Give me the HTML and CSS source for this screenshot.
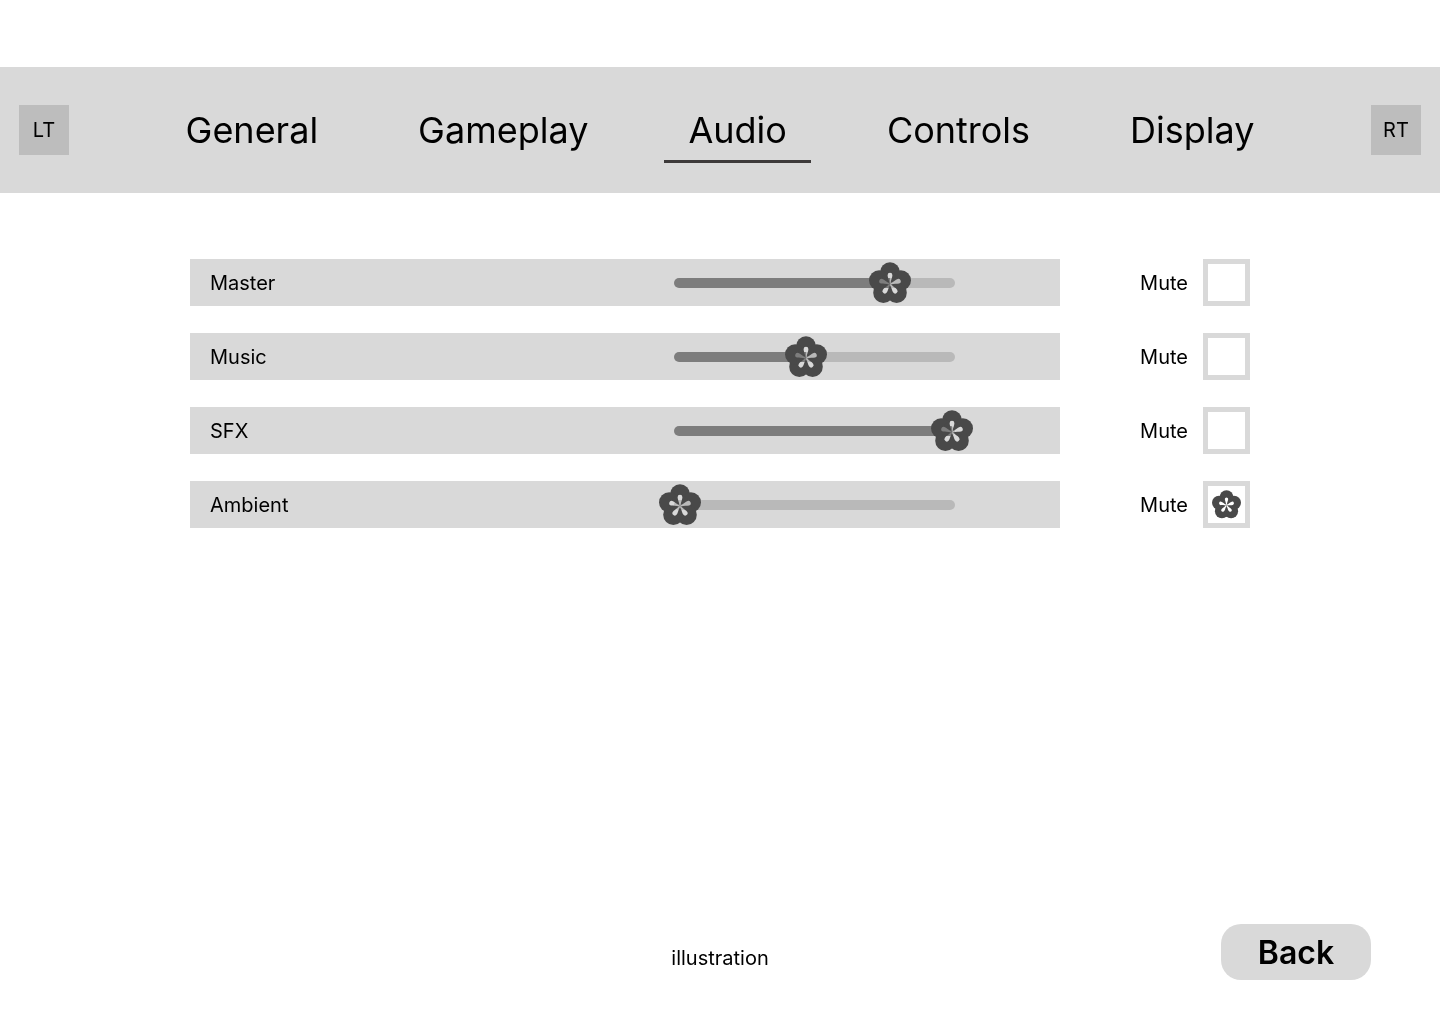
FILE: index.html
```html
<!DOCTYPE html>
<html lang="en">
<head>
    <meta charset="UTF-8">
    <meta name="viewport" content="width=device-width, initial-scale=1.0">
    <title>Audio settings</title>
    <link rel="stylesheet" href="styles.css">
</head>
<body>
<svg class="sprite" aria-hidden="true">
    <symbol id="flower" viewBox="0 0 42 42">
        <mask id="petals">
            <rect width="42" height="42" fill="#fff"/>
            <g fill="#000">
                <path id="stamen" d="M20.4 21.5 C20.2 18 18.6 15.5 18.6 13.2 A2.4 2.4 0 1 1 23.4 13.2 C23.4 15.5 21.8 18 21.6 21.5 Z"/>
                <use href="#stamen" transform="rotate(72 21 22)"/>
                <use href="#stamen" transform="rotate(144 21 22)"/>
                <use href="#stamen" transform="rotate(216 21 22)"/>
                <use href="#stamen" transform="rotate(288 21 22)"/>
            </g>
        </mask>
        <g mask="url(#petals)">
            <circle cx="21" cy="10.2" r="10"/>
            <circle cx="31.8" cy="18.4" r="10.2"/>
            <circle cx="27.6" cy="30.8" r="10.2"/>
            <circle cx="14.4" cy="30.8" r="10.2"/>
            <circle cx="10.2" cy="18.4" r="10.2"/>
            <circle cx="21" cy="21" r="10"/>
        </g>
    </symbol>
</svg>
<header class="header">
    <button type="button" class="trigger">LT</button>
    <nav class="tabs">
        <a class="tab" href="#general">General</a>
        <a class="tab" href="#gameplay">Gameplay</a>
        <a class="tab active" href="#audio" aria-current="page">Audio</a>
        <a class="tab" href="#controls">Controls</a>
        <a class="tab" href="#display">Display</a>
    </nav>
    <button type="button" class="trigger">RT</button>
</header>
<main class="settings">
    <div class="row">
        <div class="bar">
            <label for="master">Master</label>
            <div class="slider" style="--value: 77%">
                <input type="range" id="master" min="0" max="100" value="77">
                <svg class="knob" aria-hidden="true"><use href="#flower"/></svg>
            </div>
        </div>
        <label class="mute">Mute
            <span class="check">
                <input type="checkbox">
                <svg class="mark" aria-hidden="true"><use href="#flower"/></svg>
            </span>
        </label>
    </div>
    <div class="row">
        <div class="bar">
            <label for="music">Music</label>
            <div class="slider" style="--value: 47%">
                <input type="range" id="music" min="0" max="100" value="47">
                <svg class="knob" aria-hidden="true"><use href="#flower"/></svg>
            </div>
        </div>
        <label class="mute">Mute
            <span class="check">
                <input type="checkbox">
                <svg class="mark" aria-hidden="true"><use href="#flower"/></svg>
            </span>
        </label>
    </div>
    <div class="row">
        <div class="bar">
            <label for="sfx">SFX</label>
            <div class="slider" style="--value: 99%">
                <input type="range" id="sfx" min="0" max="100" value="99">
                <svg class="knob" aria-hidden="true"><use href="#flower"/></svg>
            </div>
        </div>
        <label class="mute">Mute
            <span class="check">
                <input type="checkbox">
                <svg class="mark" aria-hidden="true"><use href="#flower"/></svg>
            </span>
        </label>
    </div>
    <div class="row">
        <div class="bar">
            <label for="ambient">Ambient</label>
            <div class="slider" style="--value: 2%">
                <input type="range" id="ambient" min="0" max="100" value="2">
                <svg class="knob" aria-hidden="true"><use href="#flower"/></svg>
            </div>
        </div>
        <label class="mute">Mute
            <span class="check">
                <input type="checkbox" checked>
                <svg class="mark" aria-hidden="true"><use href="#flower"/></svg>
            </span>
        </label>
    </div>
</main>
<footer class="footer">
    <p class="caption">illustration</p>
    <button type="button" class="back">Back</button>
</footer>
<script>
    // move the knob with the slider value
    for (const range of document.querySelectorAll('.slider input')) {
        range.addEventListener('input', () => {
            range.parentElement.style.setProperty('--value', range.value + '%')
        })
    }
</script>
</body>
</html>
```
FILE: styles.css
```css
* {
    box-sizing: border-box;
}

body {
    display: flex;
    flex-direction: column;
    min-height: 100vh;
    margin: 0;
    padding-top: 67px;
    font-family: Inter, "Liberation Sans", sans-serif;
    font-size: 20px;
    line-height: 24px;
    color: #000;
    background: #fff;
}

button,
input {
    margin: 0;
    font: inherit;
    color: inherit;
}

.sprite {
    position: absolute;
    width: 0;
    height: 0;
}

/* header */
.header {
    display: flex;
    align-items: center;
    justify-content: space-between;
    padding: 30px 19px;
    background: #d9d9d9;
}

.trigger {
    width: 50px;
    height: 50px;
    padding: 0;
    border: 0;
    background: #bdbdbd;
}

.tabs {
    display: flex;
    gap: 52px;
}

.tab {
    padding: 11px 24px 8px;
    border-bottom: 3px solid transparent;
    font-size: 36px;
    line-height: 44px;
    color: inherit;
    text-decoration: none;
}

.tab.active {
    border-color: #3d3a3a;
}

/* volume rows */
.settings {
    display: flex;
    flex-direction: column;
    gap: 27px;
    width: 100%;
    max-width: 1100px;
    margin: 66px auto;
    padding: 0 20px;
}

.row {
    display: flex;
    gap: 80px;
}

.bar {
    display: flex;
    flex: 1;
    align-items: center;
    justify-content: space-between;
    height: 47px;
    padding: 0 105px 0 20px;
    background: #d9d9d9;
}

.slider {
    position: relative;
    display: flex;
    width: 281px;
}

.slider input {
    width: 100%;
    height: 10px;
    border-radius: 5px;
    appearance: none;
    background: linear-gradient(to right, #7d7d7d var(--value), #b9b9b9 var(--value));
}

.slider input::-webkit-slider-thumb {
    width: 42px;
    height: 42px;
    appearance: none;
    opacity: 0;
}

/* a muted channel has no filled part */
.row:has(.check input:checked) .slider input {
    background: #b9b9b9;
}

.knob {
    position: absolute;
    top: 50%;
    left: var(--value);
    width: 42px;
    height: 42px;
    fill: #494949;
    transform: translate(-50%, -50%);
    pointer-events: none;
}

.mute {
    display: flex;
    align-items: center;
    gap: 15px;
}

.check {
    display: grid;
    place-items: center;
}

.check input,
.mark {
    grid-area: 1 / 1;
}

.check input {
    width: 47px;
    height: 47px;
    border: 5px solid #d9d9d9;
    appearance: none;
    background: #fff;
}

.mark {
    width: 29px;
    height: 29px;
    fill: #494949;
    visibility: hidden;
    pointer-events: none;
}

.check input:checked + .mark {
    visibility: visible;
}

/* footer */
.footer {
    display: grid;
    grid-template-columns: 1fr auto 1fr;
    align-items: center;
    margin-top: auto;
    padding: 0 69px 44px;
}

.caption {
    grid-column: 2;
    margin: 12px 0 0;
}

.back {
    justify-self: end;
    width: 150px;
    height: 56px;
    padding: 2px 0 0;
    border: 0;
    border-radius: 20px;
    font-size: 32px;
    font-weight: 600;
    background: #d9d9d9;
}
```
